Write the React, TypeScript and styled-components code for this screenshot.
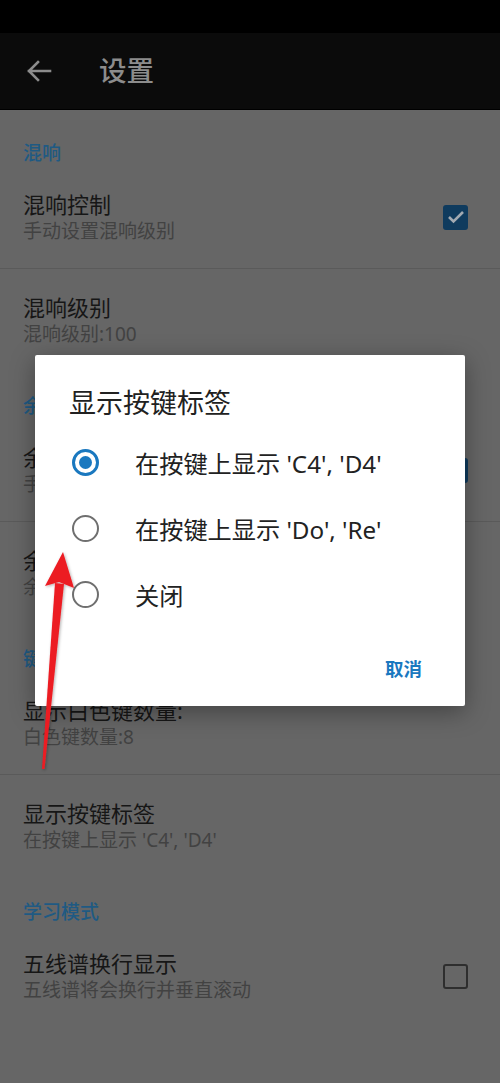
import React from "react";
import styled, { createGlobalStyle } from "styled-components";

// colours as they appear under the dialog's dim
const c = {
  page: "#666666",
  bar: "#0b0b0b",
  barText: "#8c8c8c",
  title: "#161616",
  sub: "#424242",
  accentDim: "#1f5a83",
  divider: "#5a5a5a",
  checkbox: "#0f3b5e",
  accent: "#1a78bf",
};

const Global = createGlobalStyle`
  html, body {
    margin: 0;
    padding: 0;
    background: ${c.page};
  }
  body {
    font-family: "Noto Sans", "Noto Sans CJK SC", sans-serif;
  }
`;

const Screen = styled.div`
  position: relative;
  width: 500px;
  height: 1083px;
  overflow: hidden;
  background: ${c.page};
`;

const StatusBar = styled.div`
  height: 33px;
  background: #000;
`;

const AppBar = styled.header`
  height: 77px;
  background: ${c.bar};
  display: flex;
  align-items: center;
  padding-left: 26px;
  gap: 47px;
  border-bottom: 1px solid #000;
  box-sizing: border-box;
`;

const AppTitle = styled.h1`
  margin: 0;
  font-size: 27.5px;
  font-weight: 500;
  color: ${c.barText};
  line-height: 1;
`;

const List = styled.div`
  padding-top: 8px;
`;

const SectionHeader = styled.div`
  padding: 22px 23px 0;
  height: 26px;
  line-height: 26px;
  font-size: 19px;
  color: ${c.accentDim};
  font-weight: 500;
`;

const Row = styled.div<{ $divider?: boolean }>`
  display: flex;
  align-items: center;
  justify-content: space-between;
  padding: 24px 32px 24px 23px;
  border-bottom: ${(p) => (p.$divider ? `1px solid ${c.divider}` : "none")};
`;

const RowText = styled.div`
  display: flex;
  flex-direction: column;
`;

const RowTitle = styled.div`
  font-size: 22px;
  line-height: 28px;
  color: ${c.title};
`;

const RowSub = styled.div`
  font-size: 19px;
  line-height: 26px;
  color: ${c.sub};
`;

const Check = styled.div<{ $on?: boolean }>`
  width: 25px;
  height: 25px;
  box-sizing: border-box;
  border-radius: 3px;
  background: ${(p) => (p.$on ? c.checkbox : "transparent")};
  border: ${(p) => (p.$on ? "none" : "2.5px solid #2e2e2e")};
  display: flex;
  align-items: center;
  justify-content: center;
`;

const Scrim = styled.div`
  position: absolute;
  inset: 0;
  display: flex;
  align-items: center;
  justify-content: center;
  padding-bottom: 22px;
`;

const Dialog = styled.div`
  width: 430px;
  background: #fff;
  border-radius: 2px;
  box-shadow: 0 6px 24px rgba(0, 0, 0, 0.35);
  padding: 31px 43px 24px 34px;
  box-sizing: border-box;
  display: flex;
  flex-direction: column;
`;

const DialogTitle = styled.div`
  font-size: 27px;
  line-height: 34px;
  color: #212121;
  margin-bottom: 9px;
`;

const Option = styled.label`
  display: flex;
  align-items: center;
  height: 66px;
  gap: 36px;
  padding-left: 3px;
  font-size: 24.2px;
  color: #222;
`;

const Radio = styled.span<{ $on?: boolean }>`
  width: 27px;
  height: 27px;
  box-sizing: border-box;
  border-radius: 50%;
  border: ${(p) => (p.$on ? `3px solid ${c.accent}` : "2.5px solid #6f6f6f")};
  display: flex;
  align-items: center;
  justify-content: center;
  flex-shrink: 0;

  &::after {
    content: "";
    width: 13px;
    height: 13px;
    border-radius: 50%;
    background: ${(p) => (p.$on ? c.accent : "transparent")};
  }
`;

const Actions = styled.div`
  display: flex;
  justify-content: flex-end;
  padding-top: 29px;
`;

const TextButton = styled.button`
  border: none;
  background: none;
  padding: 0;
  font-family: inherit;
  font-size: 18.5px;
  line-height: 26px;
  font-weight: 700;
  color: ${c.accent};
`;

const Annotation = styled.svg`
  position: absolute;
  left: 0;
  top: 0;
  pointer-events: none;
`;

const BackArrow = () => (
  <svg width="26" height="22" viewBox="0 0 26 22">
    <path
      d="M24 11H3M12 2L3 11l9 9"
      fill="none"
      stroke={c.barText}
      strokeWidth="2.6"
      strokeLinecap="square"
    />
  </svg>
);

const Tick = () => (
  <svg width="18" height="14" viewBox="0 0 18 14">
    <path d="M2 7l4.5 4.5L16 2" fill="none" stroke="#a2aab2" strokeWidth="2.6" />
  </svg>
);

type Pref = { title: string; sub: string; check?: boolean; on?: boolean };
type Section = { header: string; items: Pref[] };

const sections: Section[] = [
  {
    header: "混响",
    items: [
      { title: "混响控制", sub: "手动设置混响级别", check: true, on: true },
      { title: "混响级别", sub: "混响级别:100" },
    ],
  },
  {
    header: "余音",
    items: [
      { title: "余音控制", sub: "手动设置余音级别", check: true, on: true },
      { title: "余音级别", sub: "余音级别:100" },
    ],
  },
  {
    header: "键盘",
    items: [
      { title: "显示白色键数量:", sub: "白色键数量:8" },
      { title: "显示按键标签", sub: "在按键上显示 'C4', 'D4'" },
    ],
  },
  {
    header: "学习模式",
    items: [{ title: "五线谱换行显示", sub: "五线谱将会换行并垂直滚动", check: true }],
  },
];

const options = ["在按键上显示 'C4', 'D4'", "在按键上显示 'Do', 'Re'", "关闭"];

export default function App() {
  return (
    <Screen>
      <Global />
      <StatusBar />
      <AppBar>
        <BackArrow />
        <AppTitle>设置</AppTitle>
      </AppBar>
      <List>
        {sections.map((s) => (
          <div key={s.header}>
            <SectionHeader>{s.header}</SectionHeader>
            {s.items.map((it, i) => (
              <Row key={it.title} $divider={i < s.items.length - 1}>
                <RowText>
                  <RowTitle>{it.title}</RowTitle>
                  <RowSub>{it.sub}</RowSub>
                </RowText>
                {it.check && <Check $on={it.on}>{it.on && <Tick />}</Check>}
              </Row>
            ))}
          </div>
        ))}
      </List>

      <Scrim>
        <Dialog>
          <DialogTitle>显示按键标签</DialogTitle>
          {options.map((o, i) => (
            <Option key={o}>
              <Radio $on={i === 0} />
              {o}
            </Option>
          ))}
          <Actions>
            <TextButton>取消</TextButton>
          </Actions>
        </Dialog>
      </Scrim>

      <Annotation width="500" height="1083" viewBox="0 0 500 1083">
        <defs>
          <filter id="sh" x="-50%" y="-10%" width="200%" height="120%">
            <feDropShadow dx="1" dy="1" stdDeviation="1.5" floodOpacity="0.3" />
          </filter>
        </defs>
        <g fill="#ec1c24" filter="url(#sh)">
          <polygon points="42,769 44.5,769 64,584 55,583" />
          <polygon points="63,552 45,586 59,582 74,588" />
        </g>
      </Annotation>
    </Screen>
  );
}
